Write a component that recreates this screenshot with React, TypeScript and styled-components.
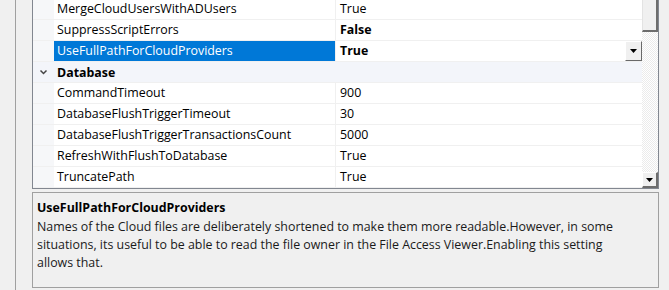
import React from 'react';
import styled, { createGlobalStyle } from 'styled-components';

const GlobalStyle = createGlobalStyle`
  html, body {
    margin: 0;
    padding: 0;
    background: #f0f0f0;
    font-family: 'Open Sans', 'Noto Sans', sans-serif;
    font-size: 12.4px;
    color: #000;
    overflow: hidden;
  }
`;

const StyledFrame = styled.div`
  margin-left: 15px;
  border-left: 1px solid #a0a0a0;
  padding-left: 16px;
  padding-right: 10px;
  height: 290px;
  display: flex;
  flex-direction: column;
  gap: 3px;
`;

const StyledGrid = styled.div`
  height: 188px;
  border: 1px solid #828790;
  border-top: none;
  background: #fff;
  display: flex;
  overflow: hidden;
`;

const StyledRows = styled.div`
  flex: 1;
  display: flex;
  flex-direction: column;
  margin-top: -1px;
  background: #f6f7f9;
`;

const StyledRow = styled.div<{ $selected?: boolean }>`
  display: grid;
  grid-template-columns: 21px 282px 1fr;
  height: 20px;
  border-bottom: 1px solid #f0f0f0;
  .name {
    padding-left: 3px;
    line-height: 20px;
    background: ${({ $selected }) => ($selected ? '#0078d7' : '#fff')};
    color: ${({ $selected }) => ($selected ? '#fff' : '#000')};
    border-right: 1px solid #f0f0f0;
    white-space: nowrap;
  }
  .value {
    padding-left: 4px;
    line-height: 20px;
    background: #fff;
    display: flex;
    align-items: center;
  }
`;

const StyledValueText = styled.span<{ $bold?: boolean }>`
  flex: 1;
  font-weight: ${({ $bold }) => ($bold ? 700 : 400)};
`;

const StyledCategory = styled.div`
  display: flex;
  align-items: center;
  height: 20px;
  border-bottom: 1px solid #f0f0f0;
  background: #f3f5fa;
  font-weight: 700;
  svg {
    width: 21px;
    flex: none;
  }
  span {
    padding-left: 3px;
  }
`;

const StyledDropButton = styled.div`
  width: 17px;
  height: 20px;
  box-sizing: border-box;
  background: #f0f0f0;
  border-top: 1px solid #fff;
  border-left: 1px solid #fff;
  border-right: 1px solid #696969;
  border-bottom: 1px solid #696969;
  display: flex;
  align-items: center;
  justify-content: center;
`;

const StyledScrollbar = styled.div`
  width: 16px;
  display: flex;
  flex-direction: column;
  background-color: #f4f4f4;
  background-image: repeating-conic-gradient(#ffffff 0% 25%, #ebebeb 0% 50%);
  background-size: 2px 2px;
`;

const StyledThumb = styled.div`
  height: 32px;
  background: #f0f0f0;
  border-left: 1px solid #e3e3e3;
  border-right: 2px solid #6d6d6d;
  border-bottom: 2px solid #6d6d6d;
  box-sizing: border-box;
`;

const StyledArrowButton = styled.div`
  margin-top: auto;
  height: 16px;
  background: #f0f0f0;
  border-top: 1px solid #fff;
  border-left: 1px solid #fff;
  border-right: 2px solid #6d6d6d;
  border-bottom: 2px solid #6d6d6d;
  box-sizing: border-box;
  display: flex;
  align-items: center;
  justify-content: center;
`;

const StyledHelp = styled.div`
  height: 89px;
  border: 1px solid #a0a0a0;
  padding: 5px 28px 0 4px;
  .title {
    font-weight: 700;
    line-height: 20px;
  }
  .text {
    line-height: 18px;
    color: #1a1a1a;
  }
`;

type Prop = { name: string; value: string; bold?: boolean; selected?: boolean };

const general: Prop[] = [
  { name: 'MergeCloudUsersWithADUsers', value: 'True' },
  { name: 'SuppressScriptErrors', value: 'False', bold: true },
  { name: 'UseFullPathForCloudProviders', value: 'True', bold: true, selected: true },
];

const database: Prop[] = [
  { name: 'CommandTimeout', value: '900' },
  { name: 'DatabaseFlushTriggerTimeout', value: '30' },
  { name: 'DatabaseFlushTriggerTransactionsCount', value: '5000' },
  { name: 'RefreshWithFlushToDatabase', value: 'True' },
  { name: 'TruncatePath', value: 'True' },
];

function Arrow() {
  return (
    <svg width="7" height="4" viewBox="0 0 7 4">
      <polygon points="0,0 7,0 3.5,4" fill="#000" />
    </svg>
  );
}

function PropRow({ name, value, bold, selected }: Prop) {
  return (
    <StyledRow $selected={selected}>
      <div />
      <div className="name">{name}</div>
      <div className="value">
        <StyledValueText $bold={bold}>{value}</StyledValueText>
        {selected && (
          <StyledDropButton>
            <Arrow />
          </StyledDropButton>
        )}
      </div>
    </StyledRow>
  );
}

export default function App() {
  return (
    <>
      <GlobalStyle />
      <StyledFrame>
        <StyledGrid>
          <StyledRows>
            {general.map((p) => (
              <PropRow key={p.name} {...p} />
            ))}
            <StyledCategory>
              <svg height="20" viewBox="0 0 21 20">
                <polyline points="7.5,8.5 10.5,11.5 13.5,8.5" fill="none" stroke="#444" strokeWidth="1.5" />
              </svg>
              <span>Database</span>
            </StyledCategory>
            {database.map((p) => (
              <PropRow key={p.name} {...p} />
            ))}
          </StyledRows>
          <StyledScrollbar>
            <StyledThumb />
            <StyledArrowButton>
              <Arrow />
            </StyledArrowButton>
          </StyledScrollbar>
        </StyledGrid>
        <StyledHelp>
          <div className="title">UseFullPathForCloudProviders</div>
          <div className="text">
            Names of the Cloud files are deliberately shortened to make them more readable.However, in some
            situations, its useful to be able to read the file owner in the File Access Viewer.Enabling this setting
            allows that.
          </div>
        </StyledHelp>
      </StyledFrame>
    </>
  );
}
